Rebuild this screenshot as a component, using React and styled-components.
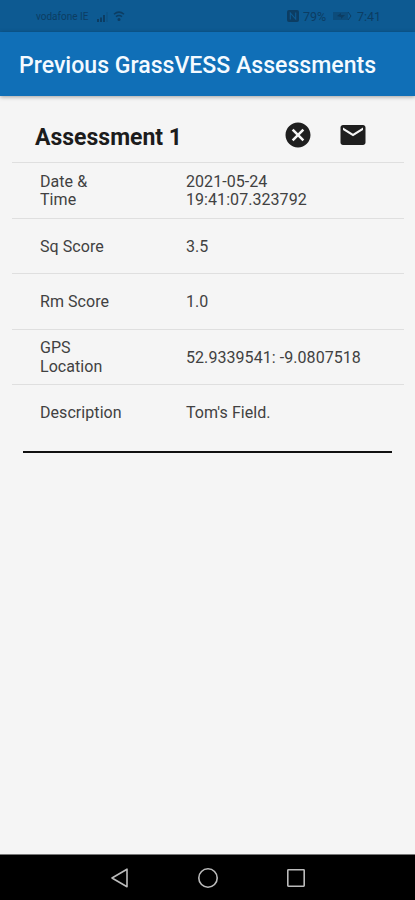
import styled, { createGlobalStyle } from "styled-components";

const assessment = {
  title: "Assessment 1",
  rows: [
    { label: "Date & Time", value: "2021-05-24 19:41:07.323792" },
    { label: "Sq Score", value: "3.5" },
    { label: "Rm Score", value: "1.0" },
    { label: "GPS Location", value: "52.9339541: -9.0807518" },
    { label: "Description", value: "Tom's Field." },
  ],
};

const SignalIcon = () => (
  <svg width="13" height="12" viewBox="0 0 13 12" fill="currentColor">
    <path d="M1 9h2v3H1zM4 7.5h2V12H4zM7 5h2v7H7z" />
    <path d="M10.5 2h1v10h-1z" opacity="0.4" />
  </svg>
);

const WifiIcon = () => (
  <svg width="12" height="12" viewBox="0 0 12 12" fill="none" stroke="currentColor" strokeWidth="1.5">
    <path d="M1 4.2Q6 0 11 4.2M3 6.7Q6 4.2 9 6.7" />
    <circle cx="6" cy="9.5" r="0.8" fill="currentColor" />
  </svg>
);

const NfcIcon = () => (
  <svg width="12" height="12" viewBox="0 0 12 12">
    <rect width="12" height="12" rx="2" fill="currentColor" />
    <path d="M3.3 9.5V3l5.4 6V2.5" fill="none" stroke="#0d5a92" strokeWidth="1.1" />
  </svg>
);

const BatteryIcon = () => (
  <svg width="21" height="10" viewBox="0 0 21 10">
    <path d="M1 1h15v8H1z" fill="currentColor" opacity="0.5" />
    <path d="M5 5l4-3v2h4L9 8V6z" fill="currentColor" />
    <path d="M16 1l3 4-3 4" fill="none" stroke="currentColor" />
  </svg>
);

const CancelIcon = () => (
  <svg width="30" height="30" viewBox="0 0 24 24" fill="currentColor">
    <path d="M12 2C6.47 2 2 6.47 2 12s4.47 10 10 10 10-4.47 10-10S17.53 2 12 2zm5 13.59L15.59 17 12 13.41 8.41 17 7 15.59 10.59 12 7 8.41 8.41 7 12 10.59 15.59 7 17 8.41 13.41 12 17 15.59z" />
  </svg>
);

const MailIcon = () => (
  <svg width="30" height="30" viewBox="0 0 24 24" fill="currentColor">
    <path d="M20 4H4c-1.1 0-1.99.9-1.99 2L2 18c0 1.1.9 2 2 2h16c1.1 0 2-.9 2-2V6c0-1.1-.9-2-2-2zm0 4l-8 5-8-5V6l8 5 8-5v2z" />
  </svg>
);

const App = () => {
  return (
    <Screen>
      <GlobalStyle />
      <StatusBar>
        <StatusGroup>
          <Carrier>vodafone IE</Carrier>
          <SignalIcon />
          <WifiIcon />
        </StatusGroup>
        <StatusGroup>
          <NfcIcon />
          <StatusText $width="25px">79%</StatusText>
          <BatteryIcon />
          <StatusText $width="25px">7:41</StatusText>
        </StatusGroup>
      </StatusBar>

      <AppBar>
        <AppBarTitle>Previous GrassVESS Assessments</AppBarTitle>
      </AppBar>

      <Content>
        <CardHeader>
          <CardTitle>{assessment.title}</CardTitle>
          <IconButton aria-label="Delete"><CancelIcon /></IconButton>
          <IconButton aria-label="Email"><MailIcon /></IconButton>
        </CardHeader>
        {assessment.rows.map(({ label, value }) => (
          <Row key={label}>
            <Label>{label}</Label>
            <Value>{value}</Value>
          </Row>
        ))}
        <Divider />
      </Content>

      <NavBar>
        <svg width="20" height="22" viewBox="0 0 20 22">
          <path d="M2 11L17 2.2v17.6z" />
        </svg>
        <svg width="22" height="22" viewBox="0 0 22 22">
          <circle cx="11" cy="11" r="9.2" />
        </svg>
        <svg width="20" height="22" viewBox="0 0 20 22">
          <rect x="1.8" y="2.8" width="16.4" height="16.4" rx="0.6" />
        </svg>
      </NavBar>
    </Screen>
  );
};

export default App;

const GlobalStyle = createGlobalStyle`
  * {
    box-sizing: border-box;
  }
  body {
    margin: 0;
    font-family: Roboto, "Liberation Sans", sans-serif;
  }
  svg {
    display: block;
    flex-shrink: 0;
  }
`;

const Screen = styled.div`
  display: flex;
  flex-direction: column;
  width: 415px;
  height: 900px;
  overflow: hidden;
  background: #f5f5f5;
`;

const StatusBar = styled.div`
  display: flex;
  align-items: center;
  justify-content: space-between;
  height: 32px;
  padding: 0 33px 0 36px;
  background: #0d5a92;
  color: #0c3d63;
`;

const StatusGroup = styled.div`
  display: flex;
  align-items: center;
  gap: 4px;
`;

const Carrier = styled.span`
  width: 56px;
  font-size: 10px;
  white-space: nowrap;
`;

const StatusText = styled.span`
  width: ${({ $width }) => $width};
  font-size: 12.5px;
  white-space: nowrap;
`;

const AppBar = styled.div`
  position: relative;
  display: flex;
  align-items: center;
  height: 64px;
  padding: 2px 19px 0;
  background: #106fb7;
  box-shadow: 0 1px 4px rgba(0, 0, 0, 0.35);
`;

const AppBarTitle = styled.h1`
  margin: 0;
  font-size: 23.08px;
  font-weight: 500;
  white-space: nowrap;
  color: #f4faff;
`;

const Content = styled.div`
  flex: 1;
  padding: 11px 11px 0 12px;
`;

const CardHeader = styled.div`
  display: flex;
  align-items: center;
  height: 55px;
  padding: 0 23px 0 23px;
`;

const CardTitle = styled.h2`
  flex: 1;
  margin: 0;
  padding-top: 5px;
  font-size: 23px;
  font-weight: 700;
  color: #1c1c1c;
`;

const IconButton = styled.button`
  display: flex;
  align-items: center;
  justify-content: center;
  width: 55.5px;
  height: 48px;
  padding: 1px 0 0;
  border: 0;
  background: none;
  color: #1e1e1e;
`;

const Row = styled.div`
  display: grid;
  grid-template-columns: 90px 180px;
  column-gap: 56px;
  align-items: center;
  height: 55.5px;
  padding: 2px 0 0 28px;
  border-top: 1px solid #dfdfdf;
  font-size: 16px;
  line-height: 18.5px;
  letter-spacing: 0.06px;
  color: #414141;
`;

const Label = styled.span`
  padding-right: 6px;
`;

const Value = styled.span``;

const Divider = styled.div`
  height: 2px;
  margin: 11px 12px 0 11px;
  background: #111;
`;

const NavBar = styled.div`
  display: flex;
  align-items: center;
  justify-content: center;
  gap: 67px;
  height: 46px;
  border-top: 1px solid #777;
  background: #000;

  svg {
    fill: none;
    stroke: #bcbcbc;
    stroke-width: 1.6;
    stroke-linejoin: round;
  }
`;
